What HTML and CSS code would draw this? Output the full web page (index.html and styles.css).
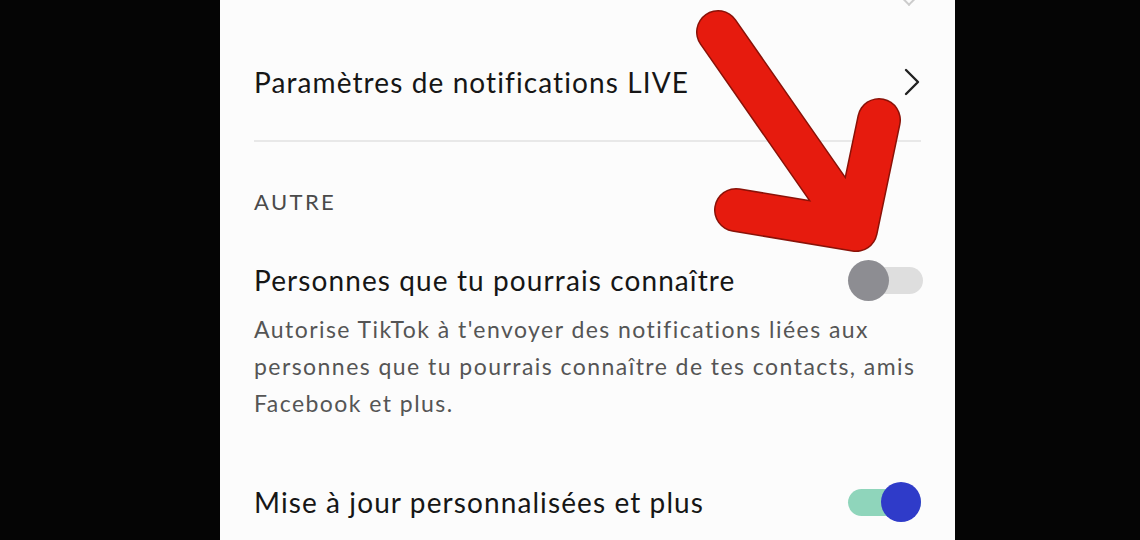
FILE: index.html
```
<!DOCTYPE html>
<html lang="fr">
<head>
  <meta charset="UTF-8">
  <title>Notifications</title>
  <link rel="stylesheet" href="styles.css">
</head>
<body>
  <div class="screen">
    <div class="prev-chevron"></div>

    <div class="row">
      <span class="row-title">Paramètres de notifications LIVE</span>
      <svg class="chevron" width="16" height="28" viewBox="0 0 16 28">
        <path d="M2 2 L14 14 L2 26" fill="none" stroke="#222" stroke-width="2.4" stroke-linecap="round" stroke-linejoin="round"/>
      </svg>
    </div>

    <div class="divider"></div>

    <div class="section-label">AUTRE</div>

    <div class="row row-toggle">
      <span class="row-title">Personnes que tu pourrais connaître</span>
      <span class="switch"><span class="knob"></span></span>
    </div>
    <p class="desc">Autorise TikTok à t'envoyer des notifications liées aux personnes que tu pourrais connaître de tes contacts, amis Facebook et plus.</p>

    <div class="row row-last">
      <span class="row-title">Mise à jour personnalisées et plus</span>
      <span class="switch on"><span class="knob"></span></span>
    </div>

    <!-- flèche rouge par-dessus l'écran -->
    <svg class="arrow" width="260" height="280" viewBox="0 0 260 280">
      <g fill="none" stroke-linecap="round" stroke-linejoin="round">
        <path d="M40 40 L178 238 M201 128 L178 238 L58 218" stroke="#8a1208" stroke-width="44"/>
        <path d="M40 40 L178 238 M201 128 L178 238 L58 218" stroke="#e61b0e" stroke-width="41"/>
      </g>
    </svg>
  </div>
</body>
</html>
```

FILE: styles.css
```
body {
  margin: 0;
  background: #050505;
  font-family: Lato, "Open Sans", Arial, sans-serif;
  overflow: hidden;
}
.screen {
  position: relative;
  width: 735px;
  height: 540px;
  margin-left: 220px;
  background: #fcfcfc;
  padding: 0 34px;
  box-sizing: border-box;
}
.prev-chevron {
  position: absolute;
  right: 41px;
  top: -6px;
  width: 8px;
  height: 8px;
  border-right: 2px solid #ccc;
  border-bottom: 2px solid #ccc;
  transform: rotate(45deg);
}
.row {
  display: flex;
  align-items: center;
  justify-content: space-between;
  height: 50px;
  padding-top: 57px;
}
.row-title {
  font-size: 28px;
  color: #161616;
  letter-spacing: 1.1px;
  white-space: nowrap;
}
.chevron {
  margin-right: 1px;
}
.divider {
  height: 2px;
  background: #e8e8e8;
  margin-top: 33px;
}
.section-label {
  margin-top: 48px;
  font-size: 22px;
  line-height: 24px;
  color: #4a4a4a;
  letter-spacing: 2.4px;
}
.row-toggle {
  padding-top: 41px;
}
.desc {
  margin: 6px 0 0;
  font-size: 23px;
  line-height: 37px;
  color: #555;
  letter-spacing: 1.45px;
  max-width: 676px;
}
.row-last {
  padding-top: 55px;
}
.switch {
  position: relative;
  width: 72px;
  height: 27px;
  border-radius: 14px;
  background: #dedede;
  margin-right: -2px;
}
.switch .knob {
  position: absolute;
  left: -3px;
  top: -7px;
  width: 41px;
  height: 41px;
  border-radius: 50%;
  background: #8d8d92;
}
.switch.on {
  width: 73px;
  background: #8fd5bb;
  margin-right: 0;
}
.switch.on .knob {
  left: auto;
  right: 0;
  top: -7px;
  width: 40px;
  height: 40px;
  background: #2f3bc9;
}
.arrow {
  position: absolute;
  left: 458px;
  top: -8px;
}
```
